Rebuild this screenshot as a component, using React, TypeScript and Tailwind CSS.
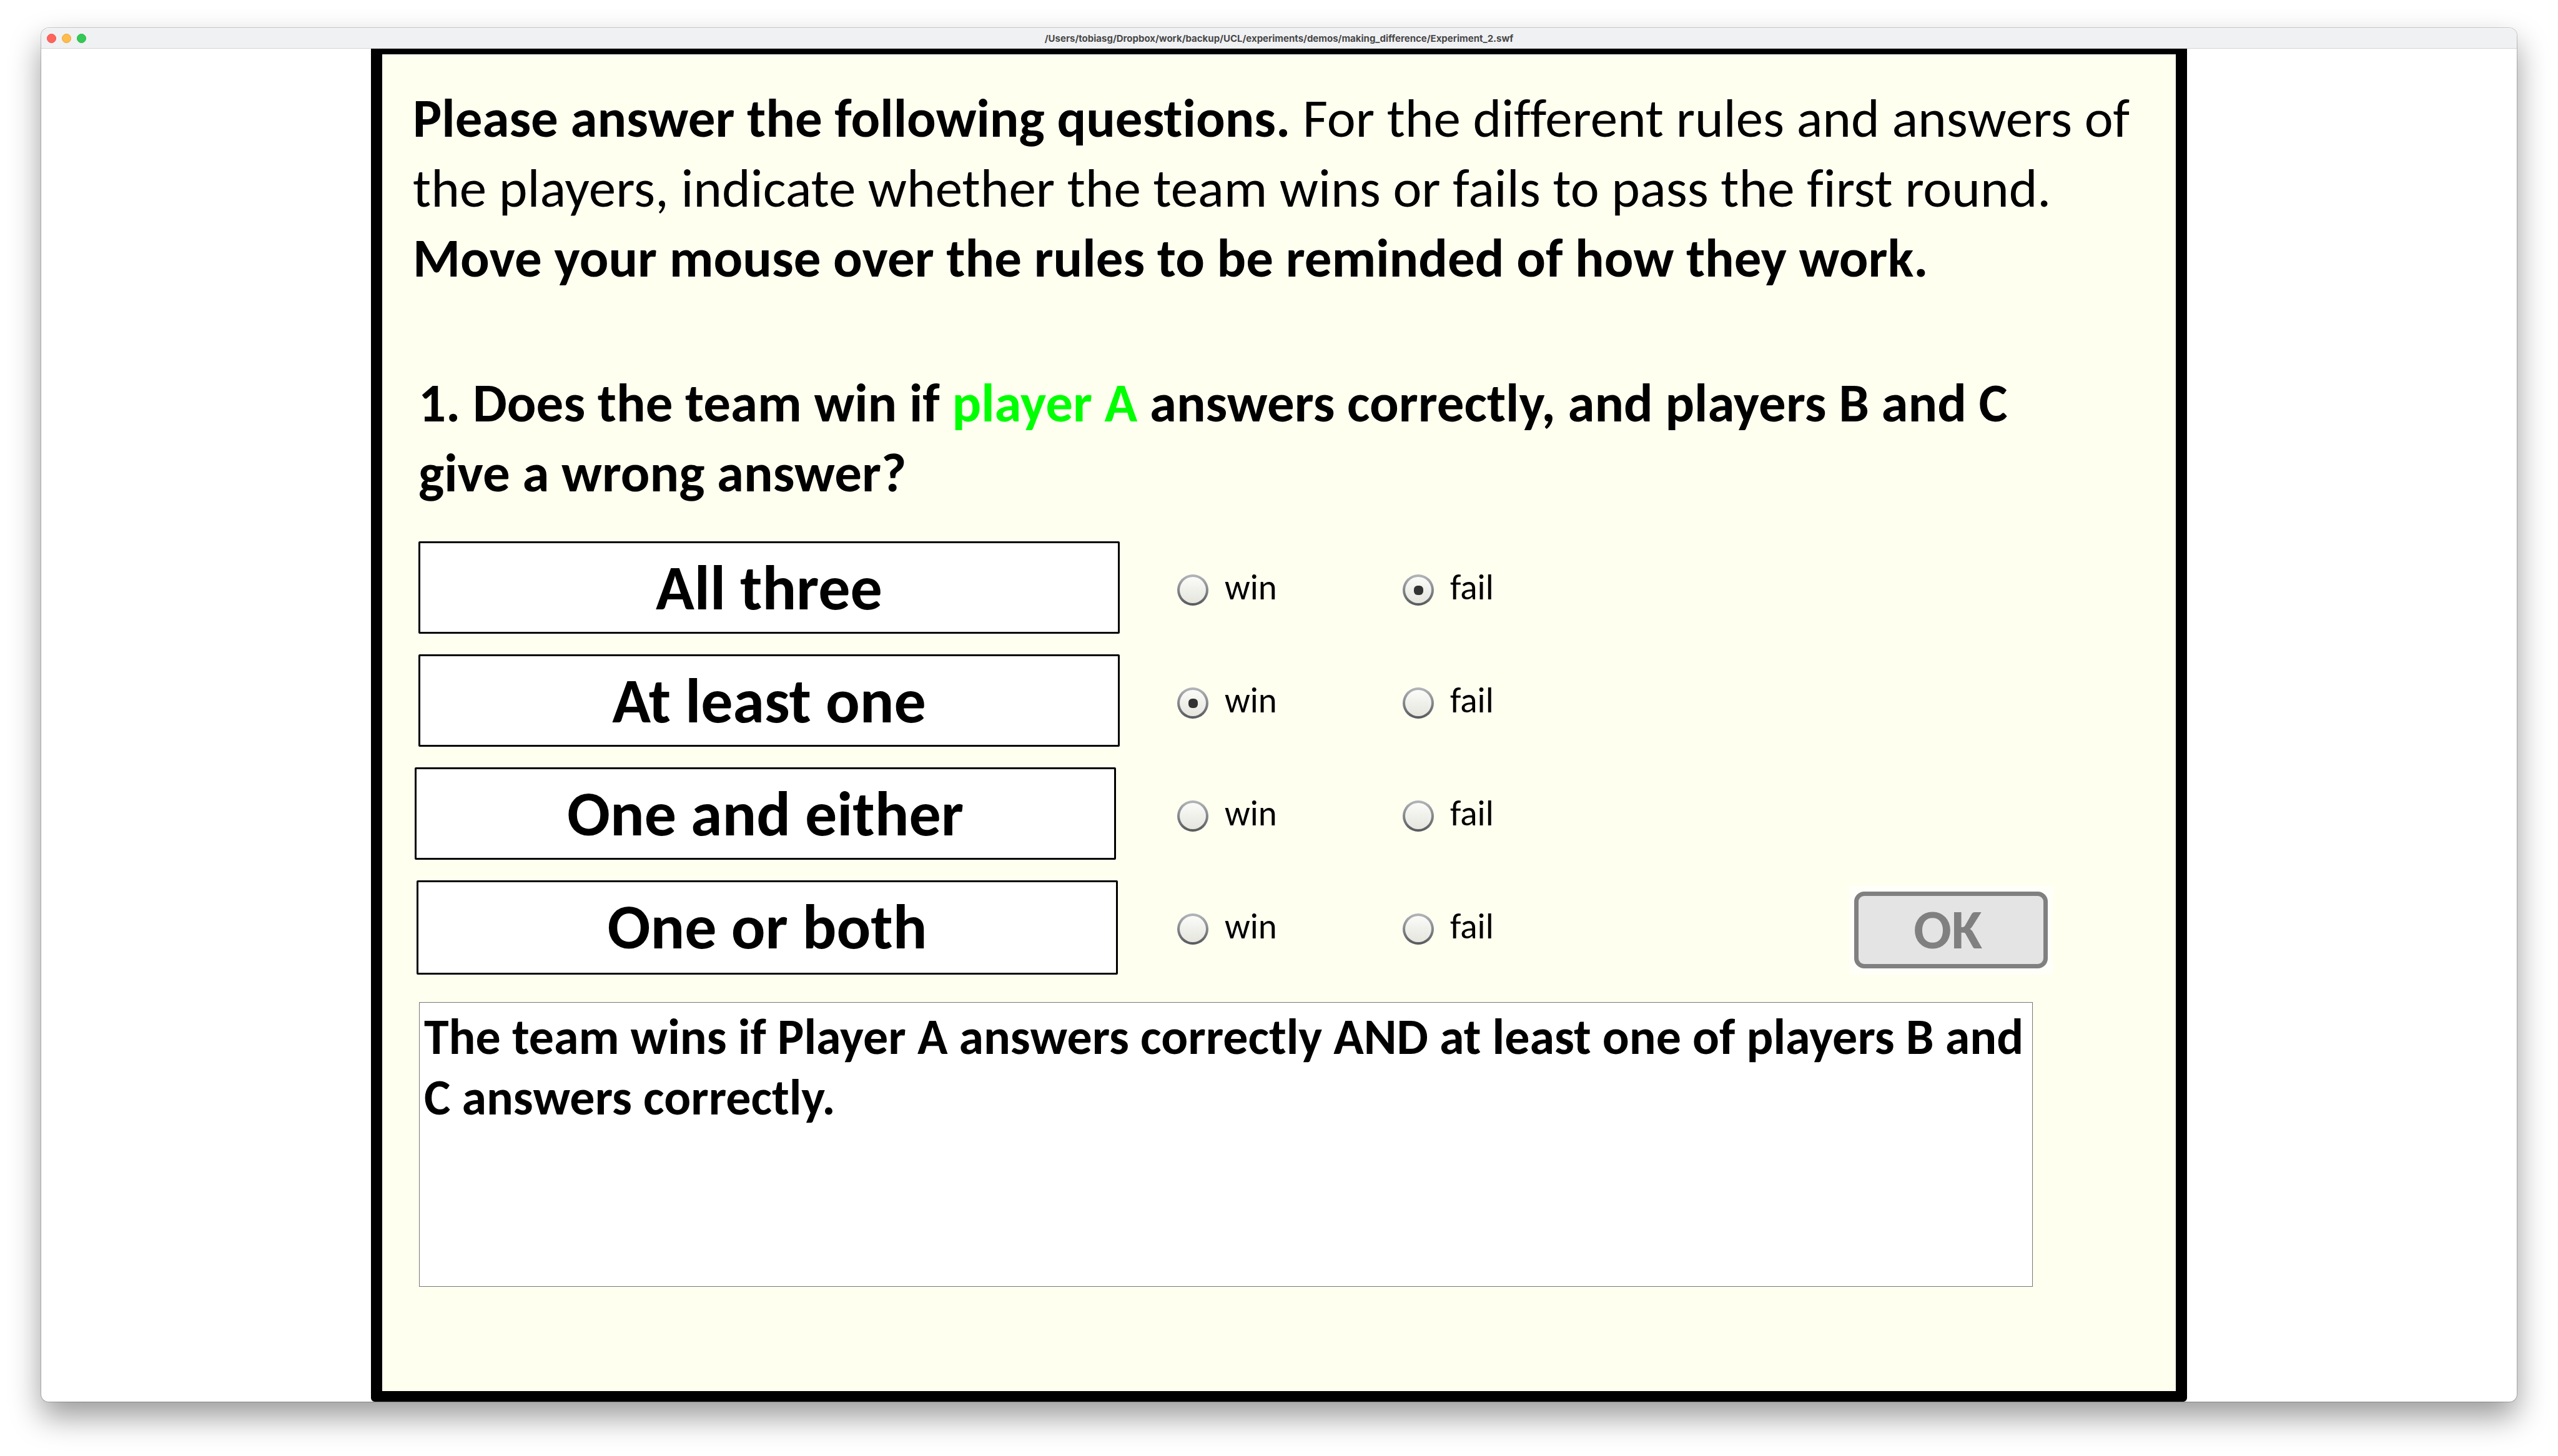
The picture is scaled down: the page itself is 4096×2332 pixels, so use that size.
import { useState } from "react";

const rules = [
  { name: "All three", box: "ml-[9px] h-[148px]" },
  { name: "At least one", box: "ml-[9px] h-[148px]" },
  { name: "One and either", box: "ml-[3px] h-[148px]" },
  { name: "One or both", box: "ml-[6px] h-[151px] pb-[3px]" },
];

const radioClass =
  "mt-[8px] grid size-[50px] shrink-0 appearance-none place-items-center rounded-full border-4 border-transparent [background:linear-gradient(#fbfbf8,#e6e6de)_padding-box,linear-gradient(#b3b6ba,#55585c)_border-box] before:size-[15px] before:rounded-[6px] before:bg-[#333] before:opacity-0 checked:before:opacity-100";

function Choice({ rule, value, checked, onSelect }: { rule: string; value: string; checked: boolean; onSelect: () => void }) {
  return (
    <label className="flex h-[148px] w-[361px] items-center gap-[26px] text-[57px] leading-[64px]">
      <input type="radio" name={rule} value={value} checked={checked} onChange={onSelect} className={radioClass} />
      <span>{value}</span>
    </label>
  );
}

export default function App() {
  const [answers, setAnswers] = useState<Record<string, string>>({ "All three": "fail", "At least one": "win" });

  return (
    <div className="flex min-h-screen flex-col bg-white px-[66px] pt-[45px] pb-[87px] font-[Calibri,Carlito,Lato,sans-serif] text-black [font-variant-ligatures:none]">
      <div className="flex flex-1 flex-col overflow-hidden rounded-[12px] bg-white shadow-[0_0_0_1px_rgba(0,0,0,0.2),0_24px_50px_rgba(0,0,0,0.4)]">
        <header className="flex h-[33px] items-center border-t border-b border-t-white border-b-[#d4d4d4] bg-[#f0f1f3] px-[9px]">
          <div className="flex flex-1 gap-[9px]">
            <button aria-label="Close" className="size-[15px] rounded-full border border-[#e9544c] bg-[#ff645c]" />
            <button aria-label="Minimize" className="size-[15px] rounded-full border border-[#e5a73f] bg-[#febc4b]" />
            <button aria-label="Zoom" className="size-[15px] rounded-full border border-[#2bb548] bg-[#32c955]" />
          </div>
          <h1 className="font-[Inter,sans-serif] text-[15px] leading-[20px] font-bold text-[#484848]">
            /Users/tobiasg/Dropbox/work/backup/UCL/experiments/demos/making_difference/Experiment_2.swf
          </h1>
          <div className="flex-1" />
        </header>
        <main className="mx-auto flex w-full max-w-[2908px] flex-1 flex-col rounded-b-[6px] border-x-[18px] border-t-[9px] border-b-[17px] border-black bg-[#fffff0] pl-[49px]">
          <p className="mt-[46px] text-[87px] leading-[112px]">
            <b>Please answer the following questions.</b> For the different rules and answers of
            <br />
            the players, indicate whether the team wins or fails to pass the first round.
            <br />
            <b>Move your mouse over the rules to be reminded of how they work.</b>
          </p>
          <h2 className="mt-[120px] ml-[9px] text-[87px] leading-[112px] font-bold">
            1. Does the team win if <span className="text-[#00ff00]">player A</span> answers correctly, and players B and C
            <br />
            give a wrong answer?
          </h2>
          <div className="mt-[54px] flex items-end justify-between pr-[197px]">
            <div className="flex flex-col gap-[33px]">
              {rules.map(({ name, box }) => (
                <fieldset key={name} className="flex items-start">
                  <div className="w-[1224px]">
                    <div className={`${box} flex w-[1123px] items-center justify-center rounded-[2px] border-[3px] border-black bg-white text-[102px] leading-[120px] font-bold`}>
                      {name}
                    </div>
                  </div>
                  {["win", "fail"].map((value) => (
                    <Choice
                      key={value}
                      rule={name}
                      value={value}
                      checked={answers[name] === value}
                      onSelect={() => setAnswers({ ...answers, [name]: value })}
                    />
                  ))}
                </fieldset>
              ))}
            </div>
            <div className="rounded-[4px] bg-[#fffffa] px-[8px] pt-[9px] pb-[10px]">
              <button disabled className="block h-[123px] w-[310px] rounded-[16px] border-[7px] border-[#808080] bg-[#e4e4e4] pr-[10px] pb-[3px] text-[90px] leading-[100px] font-bold text-[#808080]">
                OK
              </button>
            </div>
          </div>
          <div className="mt-[44px] mr-[229px] ml-[10px] h-[456px] border border-[#777] bg-white pt-[6px] pl-[7px] text-[80px] leading-[97px] font-bold">
            The team wins if Player A answers correctly AND at least one of players B and C answers correctly.
          </div>
        </main>
      </div>
    </div>
  );
}
